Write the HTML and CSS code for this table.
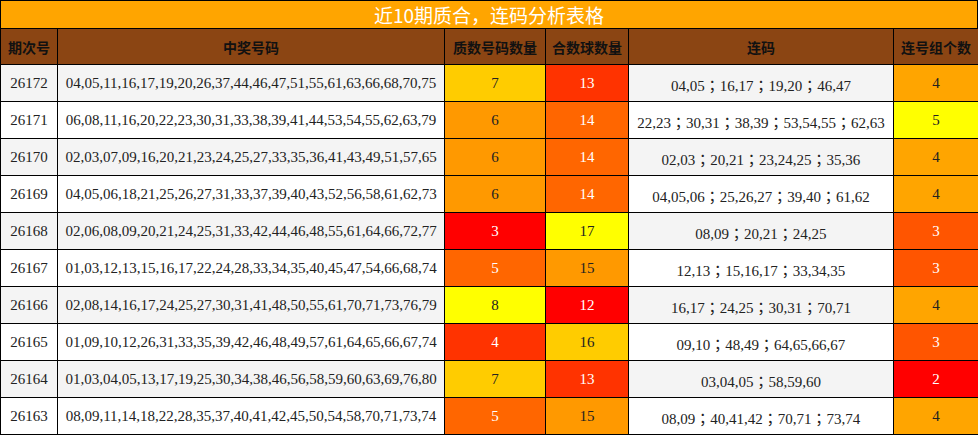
FILE: index.html
```html
<!DOCTYPE html>
<html lang="zh">
<head>
<meta charset="utf-8">
<title>近10期质合，连码分析表格</title>
<link rel="stylesheet" href="styles.css">
</head>
<body>
<div class="wrap">
  <div class="title">近10期质合，连码分析表格</div>
  <table class="grid">
    <colgroup>
      <col class="c1"><col class="c2"><col class="c3"><col class="c4"><col class="c5"><col class="c6">
    </colgroup>
    <thead>
      <tr><th>期次号</th><th>中奖号码</th><th>质数号码数量</th><th>合数球数量</th><th>连码</th><th>连号组个数</th></tr>
    </thead>
    <tbody>
      <tr class="alt"><td>26172</td><td>04,05,11,16,17,19,20,26,37,44,46,47,51,55,61,63,66,68,70,75</td><td class="k-cc">7</td><td class="k-f3 w">13</td><td class="lian">04,05；16,17；19,20；46,47</td><td class="k-fa">4</td></tr>
      <tr><td>26171</td><td>06,08,11,16,20,22,23,30,31,33,38,39,41,44,53,54,55,62,63,79</td><td class="k-f9">6</td><td class="k-f6 w">14</td><td class="lian">22,23；30,31；38,39；53,54,55；62,63</td><td class="k-ff">5</td></tr>
      <tr class="alt"><td>26170</td><td>02,03,07,09,16,20,21,23,24,25,27,33,35,36,41,43,49,51,57,65</td><td class="k-f9">6</td><td class="k-f6 w">14</td><td class="lian">02,03；20,21；23,24,25；35,36</td><td class="k-fa">4</td></tr>
      <tr><td>26169</td><td>04,05,06,18,21,25,26,27,31,33,37,39,40,43,52,56,58,61,62,73</td><td class="k-f9">6</td><td class="k-f6 w">14</td><td class="lian">04,05,06；25,26,27；39,40；61,62</td><td class="k-fa">4</td></tr>
      <tr class="alt"><td>26168</td><td>02,06,08,09,20,21,24,25,31,33,42,44,46,48,55,61,64,66,72,77</td><td class="k-f0 w">3</td><td class="k-ff">17</td><td class="lian">08,09；20,21；24,25</td><td class="k-f5 w">3</td></tr>
      <tr><td>26167</td><td>01,03,12,13,15,16,17,22,24,28,33,34,35,40,45,47,54,66,68,74</td><td class="k-f6 w">5</td><td class="k-f9">15</td><td class="lian">12,13；15,16,17；33,34,35</td><td class="k-f5 w">3</td></tr>
      <tr class="alt"><td>26166</td><td>02,08,14,16,17,24,25,27,30,31,41,48,50,55,61,70,71,73,76,79</td><td class="k-ff">8</td><td class="k-f0 w">12</td><td class="lian">16,17；24,25；30,31；70,71</td><td class="k-fa">4</td></tr>
      <tr><td>26165</td><td>01,09,10,12,26,31,33,35,39,42,46,48,49,57,61,64,65,66,67,74</td><td class="k-f3 w">4</td><td class="k-cc">16</td><td class="lian">09,10；48,49；64,65,66,67</td><td class="k-f5 w">3</td></tr>
      <tr class="alt"><td>26164</td><td>01,03,04,05,13,17,19,25,30,34,38,46,56,58,59,60,63,69,76,80</td><td class="k-cc">7</td><td class="k-f3 w">13</td><td class="lian">03,04,05；58,59,60</td><td class="k-f0 w">2</td></tr>
      <tr><td>26163</td><td>08,09,11,14,18,22,28,35,37,40,41,42,45,50,54,58,70,71,73,74</td><td class="k-f6 w">5</td><td class="k-f9">15</td><td class="lian">08,09；40,41,42；70,71；73,74</td><td class="k-fa">4</td></tr>
    </tbody>
  </table>
</div>
</body>
</html>
```

FILE: styles.css
```css
html, body {
  margin: 0;
  padding: 0;
  background: #ffffff;
}

.wrap {
  width: 978px;
}

.title {
  box-sizing: border-box;
  height: 28px;
  background: #ffa500;
  border: 1px solid #000;
  border-bottom: none;
  color: #ffffff;
  font-family: "Noto Sans CJK SC", "Noto Sans", sans-serif;
  font-size: 19px;
  line-height: 27px;
  text-align: center;
}

.grid {
  width: 978px;
  border-collapse: collapse;
  table-layout: fixed;
  font-family: "Liberation Serif", "Noto Sans CJK TC", serif;
  font-size: 15px;
  color: #222;
}

.c1 { width: 57px; }
.c2 { width: 387px; }
.c3 { width: 101px; }
.c4 { width: 83px; }
.c5 { width: 265px; }
.c6 { width: 85px; }

.grid th,
.grid td {
  border: 1px solid #000;
  padding: 0;
  text-align: center;
  vertical-align: middle;
  white-space: nowrap;
  overflow: hidden;
}

.grid th {
  height: 35px;
  background: #8b4513;
  color: #111;
  font-family: "Noto Sans CJK SC", sans-serif;
  font-size: 14px;
  font-weight: 700;
}

.grid td {
  height: 36px;
  background: #ffffff;
}

.grid td.lian {
  padding-top: 3px;
  box-sizing: border-box;
}

.grid tr.alt td {
  background: #f4f4f4;
}

.grid tr td.k-cc { background: #ffcc00; }
.grid tr td.k-f3 { background: #ff3300; }
.grid tr td.k-fa { background: #ffa500; }
.grid tr td.k-f9 { background: #ff9900; }
.grid tr td.k-f6 { background: #ff6600; }
.grid tr td.k-ff { background: #ffff00; }
.grid tr td.k-f0 { background: #ff0000; }
.grid tr td.k-f5 { background: #ff5500; }
.grid tr td.w { color: #ffffff; }
```
